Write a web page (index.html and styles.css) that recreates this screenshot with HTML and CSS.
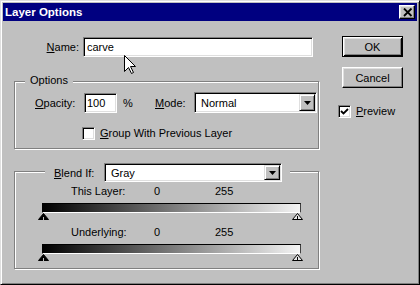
FILE: index.html
```
<!DOCTYPE html>
<html>
<head>
<meta charset="utf-8">
<link rel="stylesheet" href="styles.css">
</head>
<body>
<div class="window">
  <div class="titlebar">
    <span class="title">Layer Options</span>
    <span class="close-btn"><svg width="10" height="9" viewBox="0 0 10 9"><path d="M1 0.5 L8.5 8 M8.5 0.5 L1 8" stroke="#000" stroke-width="1.8" fill="none"/></svg></span>
  </div>
  <div class="content">
    <div class="main">
      <div class="name-row">
        <span class="name-label"><u>N</u>ame:</span>
        <div class="edit name-edit">carve</div>
      </div>
      <div class="group options">
        <div class="legend legend-options">Options</div>
        <div class="opacity-row">
          <span class="opacity-lbl"><u>O</u>pacity:</span>
          <div class="edit opacity-edit">100</div>
          <span class="pct">%</span>
          <span class="mode-lbl"><u>M</u>ode:</span>
          <div class="combo mode-combo">
            <span class="combo-text">Normal</span>
            <span class="combo-btn"><svg width="7" height="4" viewBox="0 0 7 4"><polygon points="0,0 7,0 3.5,4" fill="#000"/></svg></span>
          </div>
        </div>
        <div class="check-row group-row">
          <span class="checkbox"></span>
          <span class="check-label"><u>G</u>roup With Previous Layer</span>
        </div>
      </div>
      <div class="group blend">
        <div class="legend legend-blend">
          <span class="blend-lbl"><u>B</u>lend If:</span>
          <div class="combo blend-combo">
            <span class="combo-text">Gray</span>
            <span class="combo-btn"><svg width="7" height="4" viewBox="0 0 7 4"><polygon points="0,0 7,0 3.5,4" fill="#000"/></svg></span>
          </div>
        </div>
        <div class="values first">
          <span class="vlabel">This Layer:</span>
          <span class="vmin">0</span>
          <span class="vmax">255</span>
        </div>
        <div class="bar"></div>
        <div class="sliders">
          <svg width="11" height="7" viewBox="0 0 11 7"><polygon points="5.5,0.5 10.5,6.5 0.5,6.5" fill="#000" stroke="#000" stroke-width="1"/><line x1="5.5" y1="4" x2="5.5" y2="7" stroke="#c0c0c0" stroke-width="1"/></svg>
          <svg width="11" height="7" viewBox="0 0 11 7"><polygon points="5.5,0.5 10.5,6.5 0.5,6.5" fill="#e8e8e8" stroke="#000" stroke-width="1"/><line x1="5.5" y1="3" x2="5.5" y2="7" stroke="#000" stroke-width="1"/></svg>
        </div>
        <div class="values second">
          <span class="vlabel">Underlying:</span>
          <span class="vmin">0</span>
          <span class="vmax">255</span>
        </div>
        <div class="bar"></div>
        <div class="sliders">
          <svg width="11" height="7" viewBox="0 0 11 7"><polygon points="5.5,0.5 10.5,6.5 0.5,6.5" fill="#000" stroke="#000" stroke-width="1"/><line x1="5.5" y1="4" x2="5.5" y2="7" stroke="#c0c0c0" stroke-width="1"/></svg>
          <svg width="11" height="7" viewBox="0 0 11 7"><polygon points="5.5,0.5 10.5,6.5 0.5,6.5" fill="#e8e8e8" stroke="#000" stroke-width="1"/><line x1="5.5" y1="3" x2="5.5" y2="7" stroke="#000" stroke-width="1"/></svg>
        </div>
      </div>
    </div>
    <div class="side">
      <div class="btn default">OK</div>
      <div class="btn cancel">Cancel</div>
      <div class="check-row preview">
        <span class="checkbox"><svg width="9" height="9" viewBox="0 0 9 9"><path d="M1 4 L3.5 6.5 L8 2" stroke="#000" stroke-width="1.8" fill="none"/></svg></span>
        <span class="check-label"><u>P</u>review</span>
      </div>
    </div>
  </div>
  <svg class="cursor" width="13" height="20" viewBox="0 0 13 20"><polygon points="0.5,0.5 0.5,16.5 4.5,12.5 7.5,18.5 9.5,17.5 6.5,11.5 11.5,11.5" fill="#fff" stroke="#000" stroke-width="1" stroke-linejoin="miter"/></svg>
</div>
</body>
</html>
```

FILE: styles.css
```
* {
  box-sizing: border-box;
}

html, body {
  margin: 0;
  padding: 0;
  background: #c0c0c0;
}

body {
  font-family: "Liberation Sans", Arial, sans-serif;
  font-size: 11px;
  color: #000;
}

.window {
  position: relative;
  width: 420px;
  height: 285px;
  background: #c0c0c0;
  border: 1px solid;
  border-color: #dfdfdf #000 #000 #dfdfdf;
  box-shadow: inset 1px 1px #fff, inset -1px -1px #808080;
  padding: 2px;
}

.titlebar {
  height: 18px;
  background: #000080;
  display: flex;
  align-items: center;
  justify-content: space-between;
  padding: 0 2px 0 2px;
}

.title {
  color: #fff;
  font-weight: bold;
  font-size: 11.5px;
  line-height: 18px;
}

.close-btn {
  width: 16px;
  height: 14px;
  background: #c0c0c0;
  border: 1px solid;
  border-color: #fff #000 #000 #fff;
  box-shadow: inset -1px -1px #808080, inset 1px 1px #dfdfdf;
  display: flex;
  align-items: center;
  justify-content: center;
  padding-left: 1px;
}

.close-btn svg {
  display: block;
}

.content {
  display: flex;
  padding-left: 11px;
}

.main {
  width: 306px;
}

.name-row {
  display: flex;
  align-items: center;
  margin-top: 16px;
  height: 20px;
}

.name-label {
  width: 65px;
  text-align: right;
  margin-right: 4px;
}

.edit {
  height: 20px;
  background: #fff;
  border: 1px solid;
  border-color: #808080 #fff #fff #808080;
  box-shadow: inset 1px 1px #000, inset -1px -1px #dfdfdf;
  line-height: 18px;
  padding: 0 3px;
  white-space: nowrap;
}

.name-edit {
  width: 230px;
}

.group {
  width: 305px;
  border: 1px solid #808080;
  box-shadow: inset 1px 1px #fff, 1px 1px #fff;
}

.options {
  margin-top: 24px;
  padding-bottom: 8px;
}

.legend {
  display: flex;
  align-items: center;
  width: max-content;
  background: #c0c0c0;
}

.legend-options {
  margin-top: -8px;
  margin-left: 10px;
  padding: 0 5px;
  line-height: 13px;
}

.opacity-row {
  display: flex;
  align-items: center;
  margin-top: 5px;
  padding-left: 20px;
  height: 21px;
}

.opacity-lbl {
  width: 49px;
}

.opacity-edit {
  width: 33px;
  padding: 0 2px;
}

.pct {
  width: 32px;
  margin-left: 6px;
}

.mode-lbl {
  width: 39px;
}

.combo {
  display: flex;
  background: #fff;
  border: 1px solid;
  border-color: #808080 #fff #fff #808080;
  box-shadow: inset 1px 1px #000, inset -1px -1px #dfdfdf;
  padding: 1px;
}

.mode-combo {
  width: 123px;
  height: 21px;
}

.combo-text {
  flex: 1;
  padding-left: 5px;
  display: flex;
  align-items: center;
}

.combo-btn {
  width: 16px;
  background: #c0c0c0;
  border: 1px solid;
  border-color: #dfdfdf #000 #000 #dfdfdf;
  box-shadow: inset 1px 1px #fff, inset -1px -1px #808080;
  display: flex;
  align-items: center;
  justify-content: center;
  padding-top: 1px;
}

.combo-btn svg {
  display: block;
}

.check-row {
  display: flex;
  align-items: center;
  height: 13px;
  line-height: 13px;
}

.group-row {
  margin-top: 14px;
  padding-left: 67px;
}

.checkbox {
  width: 13px;
  height: 13px;
  flex: none;
  background: #fff;
  border: 1px solid;
  border-color: #808080 #fff #fff #808080;
  box-shadow: inset 1px 1px #000, inset -1px -1px #dfdfdf;
  display: flex;
  align-items: center;
  justify-content: center;
}

.checkbox svg {
  display: block;
}

.check-label {
  margin-left: 5px;
  white-space: nowrap;
}

.blend {
  margin-top: 22px;
  padding-bottom: 7px;
}

.legend-blend {
  margin-top: -9px;
  margin-left: 30px;
  padding: 0 8px 0 9px;
}

.blend-lbl {
  width: 50px;
}

.blend-combo {
  width: 178px;
  height: 19px;
}

.values {
  display: flex;
  height: 13px;
  line-height: 13px;
  padding-left: 56px;
}

.values.first {
  margin-top: 3px;
}

.values.second {
  margin-top: 6px;
}

.vlabel {
  width: 83px;
}

.vmin {
  width: 61px;
}

.bar {
  margin-top: 5px;
  margin-left: 27px;
  width: 259px;
  height: 10px;
  border: 1px solid;
  border-color: #000 #404040 #fff #000;
  background: linear-gradient(to right, #000 0%, #7a7a7a 50%, #f4f4f4 100%);
}

.sliders {
  display: flex;
  justify-content: space-between;
  margin-left: 23px;
  width: 265px;
  height: 7px;
}

.sliders svg {
  display: block;
}

.side {
  margin-left: 18px;
  padding-top: 15px;
}

.btn {
  width: 61px;
  height: 21px;
  margin-left: 4px;
  border: 1px solid;
  border-color: #fff #000 #000 #fff;
  box-shadow: inset -1px -1px #808080, inset 1px 1px #dfdfdf;
  display: flex;
  align-items: center;
  justify-content: center;
}

.btn.default {
  border-color: #000;
  box-shadow: inset 1px 1px #fff, inset -1px -1px #000, inset 2px 2px #dfdfdf, inset -2px -2px #808080;
}

.btn.cancel {
  margin-top: 10px;
}

.preview {
  margin-top: 17px;
}

.cursor {
  position: absolute;
  left: 123px;
  top: 54px;
}
```
